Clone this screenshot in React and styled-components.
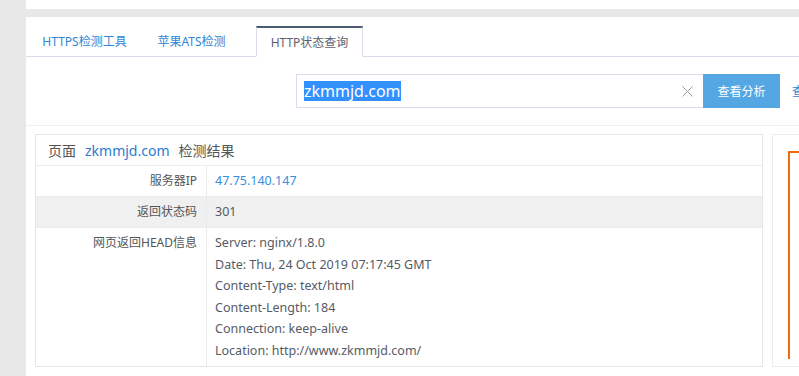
import React from 'react'
import styled, { createGlobalStyle } from 'styled-components'

const GlobalStyle = createGlobalStyle`
  body {
    margin: 0;
    background: #fff;
    font-family: "Noto Sans", "Noto Sans CJK SC", sans-serif;
    color: #555;
  }
`

const Page = styled.div`
  display: flex;
  width: 799px;
  height: 376px;
  overflow: hidden;
`

const Strip = styled.div`
  width: 26px;
  flex-shrink: 0;
  background: #e8e8e8;
`

const Main = styled.div`
  flex: 1;
  display: flex;
  flex-direction: column;
  min-width: 0;
`

const TopBar = styled.div`
  height: 9px;
  background: #fff;
`

const GrayBand = styled.div`
  height: 8px;
  background: #e8e8e8;
`

const TabBar = styled.ul`
  display: flex;
  align-items: flex-end;
  list-style: none;
  margin: 0;
  padding: 9px 0 0 1px;
  height: 30px;
  border-bottom: 1px solid #d6dce8;
`

const Tab = styled.li`
  width: ${p => p.$w}px;
  margin-left: ${p => p.$gap || 0}px;
  box-sizing: border-box;
  display: flex;
  align-items: center;
  justify-content: center;
  font-size: 12px;
  color: ${p => (p.$active ? '#5a6170' : '#2f86d6')};
  background: #fff;
  margin-bottom: ${p => (p.$active ? '-1px' : '0')};
  border: ${p => (p.$active ? '1px solid #d6dce8' : 'none')};
  border-top: ${p => (p.$active ? '2px solid #4d5b73' : 'none')};
  border-bottom: ${p => (p.$active ? '1px solid #fff' : 'none')};
  height: ${p => (p.$active ? 31 : 30)}px;
`

const SearchRow = styled.div`
  display: flex;
  align-items: center;
  padding: 17px 0 17px 270px;
  border-bottom: 1px solid #eef0f3;
`

const InputBox = styled.div`
  width: 407px;
  height: 34px;
  box-sizing: border-box;
  border: 1px solid #d6dce8;
  border-right: none;
  display: flex;
  align-items: center;
  padding: 0 10px 0 7px;
  flex-shrink: 0;
`

const Selected = styled.span`
  font-size: 16px;
  line-height: 20px;
  color: #fff;
  background: #3390ff;
`

const Clear = styled.span`
  margin-left: auto;
  display: flex;
  align-items: center;
`

const SubmitButton = styled.button`
  width: 77px;
  height: 34px;
  flex-shrink: 0;
  border: none;
  background: #55a7e3;
  color: #fff;
  font-family: inherit;
  font-size: 12px;
  padding: 0;
`

const MoreLink = styled.a`
  margin-left: 12px;
  font-size: 12px;
  color: #2f86d6;
  white-space: nowrap;
`

const Body = styled.div`
  display: flex;
  align-items: flex-start;
  gap: 9px;
  padding: 8px 0 0 9px;
`

const Card = styled.div`
  width: 728px;
  flex-shrink: 0;
  box-sizing: border-box;
  border: 1px solid #e6e6e6;
  background: #fff;
`

const CardHeader = styled.div`
  height: 30px;
  display: flex;
  align-items: center;
  padding-left: 12px;
  font-size: 14px;
  color: #555;
  border-bottom: 1px solid #ececec;
`

const Domain = styled.span`
  color: #2b7bcf;
  margin: 0 9px;
`

const Row = styled.div`
  display: flex;
  background: ${p => (p.$shade ? '#f0f0f0' : '#fff')};
  border-bottom: ${p => (p.$last ? 'none' : '1px solid #ececec')};
`

const Label = styled.div`
  width: 171px;
  flex-shrink: 0;
  box-sizing: border-box;
  border-right: 1px solid #ececec;
  text-align: right;
  padding: ${p => (p.$top ? '4px' : '0')} 9px 0 0;
  line-height: ${p => (p.$top ? '21.6px' : '30px')};
  font-size: 12px;
  color: #555;
`

const Value = styled.div`
  flex: 1;
  padding: ${p => (p.$multi ? '4px 0 4px' : '0')} 8px;
  line-height: ${p => (p.$multi ? '21.6px' : '30px')};
  font-size: 12.5px;
  color: ${p => (p.$link ? '#3a8ee0' : '#555b66')};
`

const Side = styled.div`
  flex: 1;
  height: 233px;
  box-sizing: border-box;
  border: 1px solid #ececec;
  border-right: none;
  background: #fff;
  padding: 16px 0 0 15px;
`

const Frame = styled.div`
  height: 206px;
  border-left: 2px solid #f26a10;
  border-top: 2px solid #f26a10;
`

const headers = [
  'Server: nginx/1.8.0',
  'Date: Thu, 24 Oct 2019 07:17:45 GMT',
  'Content-Type: text/html',
  'Content-Length: 184',
  'Connection: keep-alive',
  'Location: http://www.zkmmjd.com/',
]

export default function App() {
  return (
    <>
      <GlobalStyle />
      <Page>
        <Strip />
        <Main>
          <TopBar />
          <GrayBand />
          <TabBar>
            <Tab $w={115}>HTTPS检测工具</Tab>
            <Tab $w={99}>苹果ATS检测</Tab>
            <Tab $w={107} $gap={15} $active>HTTP状态查询</Tab>
          </TabBar>
          <SearchRow>
            <InputBox>
              <Selected>zkmmjd.com</Selected>
              <Clear>
                <svg width="11" height="11" viewBox="0 0 11 11">
                  <path d="M0.5 0.5 L10.5 10.5 M10.5 0.5 L0.5 10.5" stroke="#9a9a9a" strokeWidth="1" fill="none" />
                </svg>
              </Clear>
            </InputBox>
            <SubmitButton>查看分析</SubmitButton>
            <MoreLink>查看历史</MoreLink>
          </SearchRow>
          <Body>
            <Card>
              <CardHeader>
                页面<Domain>zkmmjd.com</Domain>检测结果
              </CardHeader>
              <Row>
                <Label>服务器IP</Label>
                <Value $link>47.75.140.147</Value>
              </Row>
              <Row $shade>
                <Label>返回状态码</Label>
                <Value>301</Value>
              </Row>
              <Row $last>
                <Label $top>网页返回HEAD信息</Label>
                <Value $multi>
                  {headers.map(h => (
                    <div key={h}>{h}</div>
                  ))}
                </Value>
              </Row>
            </Card>
            <Side>
              <Frame />
            </Side>
          </Body>
        </Main>
      </Page>
    </>
  )
}
